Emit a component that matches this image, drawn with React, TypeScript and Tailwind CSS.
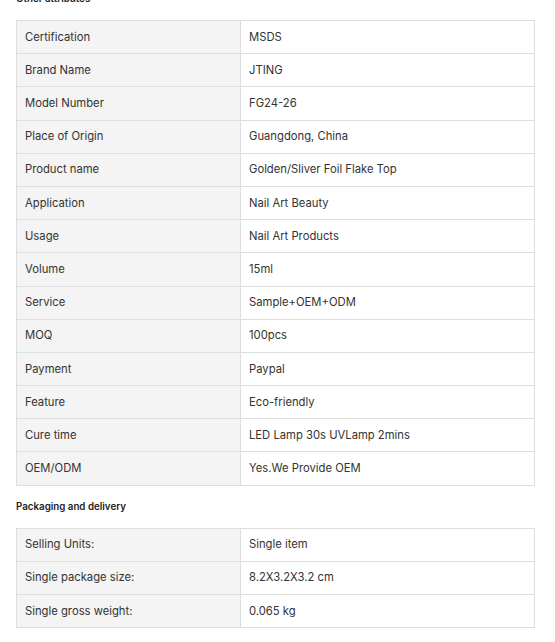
import React from "react";

const attrs: [string, string][] = [
  ["Certification", "MSDS"],
  ["Brand Name", "JTING"],
  ["Model Number", "FG24-26"],
  ["Place of Origin", "Guangdong, China"],
  ["Product name", "Golden/Sliver Foil Flake Top"],
  ["Application", "Nail Art Beauty"],
  ["Usage", "Nail Art Products"],
  ["Volume", "15ml"],
  ["Service", "Sample+OEM+ODM"],
  ["MOQ", "100pcs"],
  ["Payment", "Paypal"],
  ["Feature", "Eco-friendly"],
  ["Cure time", "LED Lamp 30s UVLamp 2mins"],
  ["OEM/ODM", "Yes.We Provide OEM"],
];

const pack: [string, string][] = [
  ["Selling Units:", "Single item"],
  ["Single package size:", "8.2X3.2X3.2 cm"],
  ["Single gross weight:", "0.065 kg"],
];

function Table({ rows }: { rows: [string, string][] }) {
  return (
    <table className="w-[519px] border-collapse text-[11.25px] text-[#333]">
      <tbody>
        {rows.map(([k, v]) => (
          <tr key={k} className="h-[33.2px]">
            <td className="w-[224px] border border-[#dedede] bg-[#f4f4f4] pl-[8px] align-middle">{k}</td>
            <td className="border border-[#dedede] bg-white pl-[8px] align-middle">{v}</td>
          </tr>
        ))}
      </tbody>
    </table>
  );
}

export default function App() {
  return (
    <div className="h-[642px] overflow-hidden bg-white pl-[16px]" style={{ fontFamily: "Inter, 'Noto Sans', sans-serif" }}>
      <div className="mt-[-7px] h-[12px] text-[9.75px] font-semibold leading-[12px] text-[#222]">Other attributes</div>
      <div className="mt-[15px]">
        <Table rows={attrs} />
      </div>
      <div className="mt-[15px] h-[12px] text-[9.75px] font-semibold leading-[12px] text-[#222]">Packaging and delivery</div>
      <div className="mt-[15px]">
        <Table rows={pack} />
      </div>
    </div>
  );
}
